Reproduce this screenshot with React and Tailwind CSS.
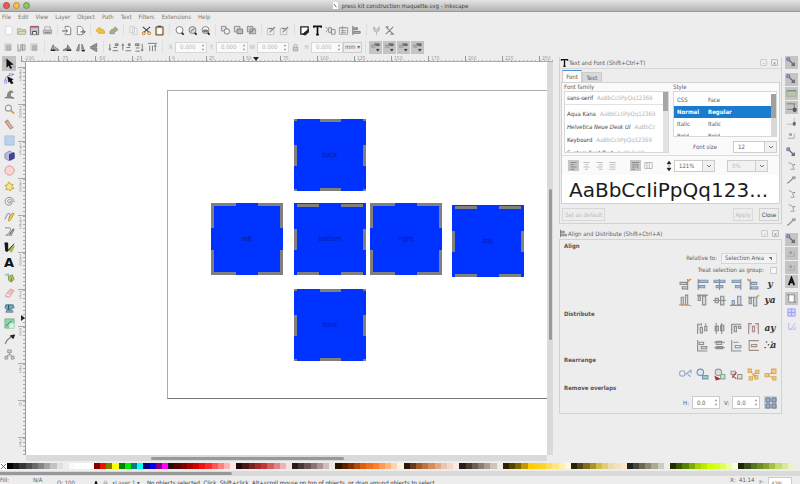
import React from "react";

const P = (d, stroke = "#777", fill = "none", sw = 1) => <path d={d} stroke={stroke} fill={fill} strokeWidth={sw} />;

const shapes = {
  newDoc: <>{P("M3 1.5h5l2 2v7H3z", "#d8d8d8", "#fff")}</>,
  open: <>{P("M1.5 4h4l1 1h4v5h-9z", "#b3b39c", "#cfcdb0")}{P("M3 7h8l-1 3H2z", "#b3b39c", "#deddc4")}</>,
  save: <>{P("M1.5 1.5h9v9h-9z", "#7a6672", "#c9c3d0")}{P("M2 2h8", "#b0505a", "none", 1.5)}{P("M4 10V7h4v3", "#333", "#fff")}</>,
  print: <>{P("M3 5V2h6v3", "#aaa", "#eee")}{P("M1.5 5.5h9v4h-9z", "#999", "#c8c8c8")}{P("M3 8h6", "#777")}</>,
  importI: <>{P("M3.5 4V1.5h4l2 2v7h-6V9", "#777", "#f8f8f8")}{P("M0 6.5h6M4 4.5l2 2-2 2", "#555")}</>,
  exportI: <>{P("M2.5 1.5h4l2 2v7h-6z", "#888", "#f8f8f8")}{P("M6 7.5h5M9 5.5l2 2-2 2", "#555")}</>,
  undo: <>{P("M1 6l4-3.5v2c4-.5 6 1.5 5.5 4.500H5V9.500z", "#e0a82c", "#f2c136")}</>,
  redo: <>{P("M11 5L7.500 2v2C4 4 1.500 6 2 9.500h5V8z", "#999c80", "#a9ac90")}</>,
  copy: <>{P("M2 1.500h5v7H2zM5 3.500h5v7H5z", "#cfcfcf", "#f0f0f0")}</>,
  cut: <>{P("M2 2l7 6M10 2L3 8", "#444", "none", 1.3)}<circle cx="3" cy="9" r="1.6" stroke="#c07a2c" fill="none" /><circle cx="9" cy="9" r="1.6" stroke="#c07a2c" fill="none" /></>,
  paste: <>{P("M2 2h8v9H2z", "#7b6136", "#a38a60")}{P("M3.500 3.500h5v6h-5z", "#eee", "#fff")}{P("M4 1.500h4", "#444", "none", 1.5)}</>,
  zoomSel: <><circle cx="6" cy="5.5" r="3.8" stroke="#777" fill="#fff" />{P("M8.500 8.500l2 2", "#222", "none", 1.8)}</>,
  zoomDraw: <><circle cx="6" cy="5.5" r="3.8" stroke="#777" fill="#ddd" />{P("M4 7l4-3", "#555")}{P("M8.500 8.500l2 2", "#222", "none", 1.8)}</>,
  zoomPage: <><circle cx="6" cy="5.5" r="3.8" stroke="#777" fill="#fff" />{P("M4 5.500h4v2H4z", "#666", "#888")}{P("M8.500 8.500l2 2", "#222", "none", 1.8)}</>,
  dup: <>{P("M1.500 1.500h5v5h-5z", "#888", "#ddd")}<circle cx="7.5" cy="7" r="3" stroke="#777" fill="#eee" /></>,
  clone: <>{P("M1.500 1.500h6v6h-6z", "#888", "#ddd")}{P("M4.500 4.500h6v5h-6z", "#777", "#bbb")}</>,
  unlink: <>{P("M1.500 1.500h6v6h-6zM4.500 4.500h6v5h-6z", "#888", "#ccc")}{P("M3 10l7-7", "#777")}</>,
  group: <>{P("M1.500 3.500h7v7h-7z", "#bbb", "#eee")}{P("M4 8l6-6M3 4h4", "#888", "none", 1.3)}</>,
  fill: <>{P("M2 2h8v5l-3 3H2z", "#222", "#fff", 1.4)}{P("M4 10l6-5v3l-3 3z", "#222", "#222")}</>,
  text: <>{P("M2 3V1.500h8V3M6 2v8.500M4.500 10.500h3", "#111", "none", 1.8)}</>,
  xml: <>{P("M1 2l2 3-2 3", "#999")}{P("M4 3h3v5H4zM7 5h4v5H7z", "#888", "#eee")}</>,
  layers: <>{P("M1.500 3h9v7h-9z", "#999", "#f4f4f4")}{P("M1.500 3h9M3 6h6M3 8h6M5 1v9", "#999")}</>,
  alignI: <>{P("M2 1v10", "#666")}{P("M3 3h4v2H3zM3 7h7v2H3z", "#777", "#bbb")}</>,
  prefs: <>{P("M3 2l3 3 3-3v4l-3 2-3-2zM6 8v3", "#b4b4b4", "#ccc")}</>,
  docprefs: <>{P("M2 2l8 8M10 2l-8 8M2 2h3M7 10h4", "#888", "none", 1.3)}</>,
  selAll: <>{P("M2 2h7v7H2z", "#ccc", "#d8d8d8")}{P("M4 4h4v5H4z", "#aaa", "#bbb")}</>,
  selLayer: <>{P("M2 2v8h3M5 3h5v6H5z", "#aaa", "#ccc")}{P("M7 2v8", "#999")}</>,
  rotL: <>{P("M2 9l2.500-6 1.500 6zM7 9h4L6 5", "#777", "#aaa")}{P("M2 9h5", "#222", "none", 1.4)}</>,
  rotR: <>{P("M1 9h4l1-3zM6 9V3l4 6z", "#777", "#999")}{P("M5 9h5", "#222", "none", 1.4)}</>,
  flipH: <>{P("M1.500 9.500l3-7v7zM10.500 9.500l-3-7v7z", "#777", "#aaa")}{P("M7.500 9.500h3", "#222", "none", 1.4)}</>,
  flipV: <>{P("M9.500 1.500l-7 4h7zM9.500 10.500l-7-4h7z", "#777", "#999")}</>,
  lower: <>{P("M2 2v7M1 7l1 2 1-2M5 9.500h6M6 6h4M8 2h3v2H8z", "#777", "#bbb")}</>,
  raise: <>{P("M2 9V2M1 4l1-2 1 2M5 9.500h6M6 6h4M8 2h2v2H8z", "#777", "#bbb")}</>,
  lowest: <>{P("M1.500 2h4v2h-4zM2 6.500h4M1.500 10h5M9 2v8M8 8l1 2 1-2", "#777", "#bbb")}</>,
  topmost: <>{P("M1 1.500h10M3 4v6M6 4v6M9 10V3M8 5l1-2 1 2", "#777", "#bbb")}</>,
  lock: <>{P("M3 5.500h6v5H3z", "#999", "#ccc")}{P("M4 5V3c0-2 4-2 4 0v2", "#999")}</>,
  affect: <>{P("M1 3.500h9M1 5.500h5", "#888")}{P("M5 2h5v2H7z", "#666", "#777")}{P("M7 8h3l-1.500 2z", "#333", "#333", 0.6)}</>,
  arrow: <>{P("M3 1l7 6-3.500.3L8.500 11 7 11.500 5.300 8 3 10z", "#000", "#111", 0.5)}{P("M1 1v3M1 1h2M10 9h2v2", "#999")}</>,
  node: <>{P("M1 10C1 4 5 1.500 11 1.500", "#6a6ad8")}{P("M0 8h3v3H0zM6 0h3v3H6z", "#7777cc", "#d5d5ff", 0.6)}{P("M4 4l6 3-2 1 2 3-2 1-2-3-1 1z", "#000", "#111", 0.5)}</>,
  tweak: <>{P("M1 9.500c2 0 3-1 3-3 0-4 4-6 6-3-1 0-3 0-3 2s0 3 4 4.500z", "#777", "#8b8b8b")}</>,
  zoomT: <><circle cx="4.8" cy="4.5" r="3.3" stroke="#999" fill="#eef3fa" strokeWidth="1.2" />{P("M7.500 7l3.500 3.500", "#e0972c", "none", 2)}</>,
  measure: <>{P("M1 3l3-2 6 8-3 2z", "#b08070", "#c99a88")}{P("M5 2l5 7M3 3l5 7", "#e9cfc4")}</>,
  rect: <>{P("M1 1h10v10H1z", "#a9bed8", "#bcd2ec")}</>,
  box: <>{P("M1 4l5-3 5 3v5l-5 3-5-3z", "#8c93b8", "#b5b9e0")}{P("M6 5l5-2v6l-5 2z", "#333a80", "#3f489c")}</>,
  circle: <circle cx="6" cy="6" r="5" stroke="#d88f8f" fill="#ffd3d3" />,
  star: <>{P("M5 1l1.500 2L10 4 8.500 6 11 8l-3 .5L7 11 5 9l-3 .5L3 7 1 5l3-1z", "#c0a136", "#f7e48e")}</>,
  spiral: <>{P("M6 6c1-1 2 0 1.500 1-1 1.500-3.500.5-3.500-1C4 3 8 3 9 5.500c.5 3-2 5-4.500 4.500C0 9 0 2 5.500 1.500 9 1.200 11 4 11 6.500", "#8c8c8c")}</>,
  pencil: <>{P("M1 9c3-5 2-7 5-6s-3 5 1 6", "#6470b0")}{P("M5 9l4-7 2 1-4 7-2 1z", "#c0a02c", "#f0d24c")}</>,
  bezier: <>{P("M1 2h5c3 0 0 7-4 8h7", "#888")}{P("M6 9l4-6 1 1-3 5z", "#666", "#bbb")}</>,
  calli: <>{P("M1 1h3v9H2zM4 9c3 0 3-3 7-7", "#111", "#111", 1)}{P("M6 9l4-5 1 1-3 6z", "#83a02c", "#bcd54d")}</>,
  bucket: <>{P("M1 3l4-1 0 4", "#8fb0d0", "#bcd")}{P("M5 5l4-2 2 5-3 3-3-2z", "#7a9638", "#b1cb65")}{P("M8 6v4", "#5d7a27")}</>,
  eraser: <>{P("M2 7l5-6 4 2-5 7-4-.5z", "#d8a0a0", "#f4bcbc")}{P("M2 7l4 1.500", "#fff")}</>,
  spray: <>{P("M2 2h8l1 3-4 2H3L1 5z", "#397a91", "#75a7ba")}{P("M3 8h6l1 2H2z", "#5f8096", "#8fb0c0")}{P("M5 2v5", "#345")}</>,
  gradient: <>{P("M1 1h10v10H1z", "#7ab490", "#8fd0ab")}{P("M6 6h5v5H6z", "#bfe3cc", "#d8f2e0")}{P("M2 9l6-6", "#367a70")}</>,
  dropper: <>{P("M1.500 11C2 8 5 5 8 3.500", "#888", "none", 1.5)}{P("M7 2l3 3 1.500-4z", "#111", "#222")}</>,
  connector: <>{P("M4 1h4v3H4zM1 8h3v3H1zM8 8h3v3H8zM6 4v2M2.500 8L6 5.500 9.500 8", "#999", "#ccc")}</>,
  snap: <>{P("M2 2l7 7M6 9h3V6", "#667", "none", 1.4)}{P("M1 1h3v3H1z", "#6a72a8", "#9aa0c8")}</>,
  snapBox: <>{P("M1 3h10v6H1z", "#9bb08f", "#b8c9ab")}{P("M1 3h10", "#777")}</>,
  snapEdge: <>{P("M1 2h9M1 8h7M9 2v9", "#777")}{P("M8 7h3v3H8z", "#444", "#666")}</>,
  snapCorner: <>{P("M1 9h8M9 2v6", "#bbb")}{P("M8 7h2v3H8z", "#666", "#666")}</>,
  snapMid: <>{P("M2 9h7V4", "#aaa")}{P("M4 4h2v2H4z", "#999", "#bbb")}</>,
  snapPath: <>{P("M3 2c5 0 4 4 6 7M5 9h4", "#999")}{P("M8 4h2", "#666")}</>,
  snapCurve: <>{P("M1 9c4 0 4-6 9-6", "#888", "none", 1.3)}{P("M7 2h3v2H7z", "#99a", "#aab")}</>,
  snapText: <>{P("M3 10l3-8 3 8M4 7h4", "#111", "none", 2)}</>,
  snapPage: <>{P("M3 2h6v8H3z", "#888", "#fff")}{P("M1 2h2M9 10h2", "#777")}</>,
  snapGrid: <>{P("M2 2h8v8H2zM2 6h8M6 2v8", "#a0a0f4", "#d0d0ff")}</>,
  snapGuide: <>{P("M3 2v7h3M5 10l5-8M7 9h3V6", "#b4b4f5")}</>,
};

const Icon = ({ name, className = "size-[11px]" }) => (
  <svg viewBox="0 0 12 12" className={className} aria-hidden="true">{shapes[name]}</svg>
);

const Tool = ({ name, on }) => (
  <button aria-label={name} className={"flex h-[13px] w-[13px] shrink-0 items-center justify-center " + (on ? "bg-[#c4c4c4]" : "")}>
    <Icon name={name} />
  </button>
);

const Sep = () => <span className="mx-[3px] h-3 w-px shrink-0 bg-[#dedede]" />;

const ToolGroups = ({ groups }) =>
  groups.map((g, i) => (
    <React.Fragment key={i}>
      {i > 0 && <Sep />}
      {g.map((n, j) => <Tool key={j} name={n} />)}
    </React.Fragment>
  ));

const Field = ({ label, value }) => (
  <label className="flex items-center text-[#b5b5b5]">
    <span className="w-[9px] text-center">{label}</span>
    <span className="flex h-[11px] w-8 items-center border border-[#d8d8d8] bg-[#fafafa]">
      <input defaultValue={value} className="w-6 min-w-0 bg-transparent pl-1 outline-none" />
      <Spin />
    </span>
  </label>
);

const Spin = () => (
  <svg viewBox="0 0 6 10" className="h-[9px] w-[6px] shrink-0" aria-hidden="true">
    <path d="M1.500 3.500L3 1.500l1.500 2zM1.500 6.500L3 8.500l1.500-2z" fill="#999" />
  </svg>
);

const topTools = [
  ["newDoc", "open", "save", "print"],
  ["importI", "exportI"],
  ["undo", "redo"],
  ["copy", "cut", "paste"],
  ["zoomSel", "zoomDraw", "zoomPage"],
  ["dup", "clone", "unlink"],
  ["group", "group"],
  ["fill", "text", "xml", "layers", "alignI"],
  ["prefs", "docprefs"],
];

const selTools = [
  ["selAll", "selLayer", "selAll"],
  ["rotL", "rotR", "flipH", "flipV"],
  ["lower", "raise", "lowest", "topmost"],
];

const boxTools = ["arrow", "node", "tweak", "zoomT", "measure", "rect", "box", "circle", "star", "spiral", "pencil", "bezier", "calli", "letter", "bucket", "eraser", "spray", "gradient", "dropper", "connector"];

const snapGroups = [
  [["snap", 1]],
  [["snap", 1], ["snapBox", 1], ["snapEdge", 1], ["snapCorner", 0], ["snapMid", 0]],
  [["snap", 0], ["snapPath", 0], ["snapCurve", 0], ["snapPath", 0], ["snapPath", 0], ["snapCurve", 0]],
  [["snap", 1], ["snapMid", 1], ["snapMid", 1], ["snapText", 1]],
  [["snapPage", 1], ["snapGrid", 0], ["snapGuide", 0]],
];

// Grey finger-joint tabs, by panel kind, on a 72 unit square.
const joints = {
  mid: "M0 0h3v2H0zM69 0h3v2h-3zM0 70h3v2H0zM69 70h3v2h-3zM26 0h21v3H26zM26 69h21v3H26zM0 26h3v21H0zM69 26h3v21h-3z",
  corner: "M0 0h25v3H3v22H0zM47 0h25v25h-3V3H47zM0 47h3v22h22v3H0zM69 47h3v25H47v-3h22z",
  mixed: "M3 1h22v3H3zM47 1h22v3H47zM3 69h22v3H3zM47 69h22v3H47zM0 26h3v21H0zM69 26h3v21h-3z",
};

const Panel = ({ place, kind, label }) => (
  <div className={"absolute flex size-[72px] items-center justify-center bg-[#0033ff] " + place}>
    <svg viewBox="0 0 72 72" className="absolute inset-0" aria-hidden="true"><path d={joints[kind]} fill="#808080" /></svg>
    <span className="relative text-[7px] text-[#0a1c8c]">{label}</span>
  </div>
);

const hex = (c) => [1, 3, 5].map((i) => parseInt(c.slice(i, i + 2), 16));
const mix = (stops, t) => {
  const p = t * (stops.length - 1);
  const i = Math.min(Math.floor(p), stops.length - 2);
  const a = hex(stops[i]);
  const b = hex(stops[i + 1]);
  return `rgb(${a.map((v, k) => Math.round(v + (b[k] - v) * (p - i))).join(",")})`;
};
const ramps = [
  [14, ["#000000", "#444444", "#8a8a8a", "#dddddd", "#ffffff", "#ffffff"]],
  [12, ["#800000", "#ee1100", "#808000", "#ffff00", "#008000", "#00ee00", "#008080", "#00ffff", "#000080", "#0000ff", "#800080", "#ff00ff"]],
  [11, ["#280b0b", "#800000", "#d40000", "#ff2a2a", "#ff8080", "#ffe5e5"]],
  [9, ["#1c0a0a", "#782121", "#c83737", "#de8787", "#f9e0e0"]],
  [7, ["#241c1c", "#6c5353", "#ac9393", "#f0e8e8"]],
  [11, ["#2b1100", "#803300", "#e06010", "#ff7f2a", "#ffb380", "#fff0e0"]],
  [9, ["#28170b", "#a05a2c", "#d38d5f", "#e9c6af", "#fbeae0"]],
  [7, ["#241f1c", "#6c5d53", "#ac9d93", "#efebe8"]],
  [11, ["#2b2200", "#806600", "#ffcc00", "#ffd42a", "#ffe680", "#fff8e0"]],
  [9, ["#28220b", "#806c20", "#d3bc3f", "#e9ddaf", "#fbe6cc"]],
  [7, ["#24221c", "#6c6753", "#aca793", "#eeeee6"]],
  [11, ["#222b00", "#558000", "#aad400", "#ccff00", "#ddff55", "#f8ffe0"]],
  [9, ["#1a2409", "#55751f", "#89a02c", "#c2dd68", "#e8f4c8"]],
];

const Palette = () => (
  <div className="flex h-[10px] shrink-0 items-center pr-[6px]">
    <svg viewBox="0 0 7 7" className="size-[7px] shrink-0 bg-white" aria-hidden="true"><path d="M1 1l5 5M6 1L1 6" stroke="#a55" /></svg>
    {ramps.map(([n, stops], i) => (
      <div key={i} className="flex h-[6px]" style={{ flexGrow: n, flexBasis: 0 }}>
        {Array.from({ length: n }, (_, j) => <span key={j} className="flex-1" style={{ background: mix(stops, j / (n - 1)) }} />)}
      </div>
    ))}
  </div>
);

const DockTitle = ({ icon, children }) => (
  <div className="flex h-[11px] items-center pr-[3px]">
    <span className="flex w-[9px] justify-center">{icon}</span>
    <h2 className="flex-1">{children}</h2>
    <button aria-label="Iconify" className="mr-1 flex size-[7px] items-center justify-center rounded-[1px] border border-[#ccc] text-[5px] text-[#888]">–</button>
    <button aria-label="Close panel" className="flex size-[7px] items-center justify-center rounded-[1px] border border-[#bbb] text-[5px] text-[#666]">×</button>
  </div>
);

const families = [
  ["sans-serif", "AaBbCcIiPpQq12369", "text-[#334]"],
  ["Aqua Kana", "AaBbCcIiPpQq12369", "text-[#444]"],
  ["Helvetica Neue Desk UI", "AaBbCc", "italic text-[#444]"],
  ["Keyboard", "AaBbCcIiPpQq12369", "text-[#444]"],
  ["System Font Text", "AaBbCcIiP", "text-[#444]"],
];

const faces = [["CSS", "Face"], ["Normal", "Regular"], ["Italic", "Italic"], ["Bold", "Bold"]];

const Down = () => (
  <svg viewBox="0 0 6 6" className="size-[6px]" aria-hidden="true"><path d="M1 2l2 2 2-2" stroke="#777" fill="none" /></svg>
);

const Combo = ({ label, value, off, width }) => (
  <span className="flex h-3">
    <input aria-label={label} defaultValue={value} disabled={off} className={"min-w-0 border border-[#ccc] pl-1 outline-none " + width + (off ? " bg-[#f2f2f2] text-[#bbb]" : " bg-white")} />
    <button aria-label={label + " list"} className="flex w-3 items-center justify-center border border-l-0 border-[#ccc] bg-[#f0f0f0]"><Down /></button>
  </span>
);

const LineAlign = ({ i, on }) => (
  <button aria-label={"Text alignment " + (i + 1)} className={"flex size-[11px] items-center justify-center " + (on ? "bg-[#c6c6c6]" : "")}>
    <svg viewBox="0 0 12 12" className="size-[9px]" aria-hidden="true">
      <path d={["M2 2h8M2 5h5M2 8h8M2 11h5", "M2 2h8M4 5h4M2 8h8M4 11h4", "M2 2h8M5 5h5M2 8h8M5 11h5", "M2 2h8M2 5h8M2 8h8M2 11h8", "M1 2h10M1 5h7M1 8h6M1 11h4M9 4v6", "M1 2h10v8H1zM4 2v8M7 2v8"][i]} stroke={on ? "#777" : "#aaa"} fill="none" />
    </svg>
  </button>
);

const TextPanel = () => (
  <section className="flex flex-col border-x border-b border-[#d2d2d2] pb-[2px]">
    <DockTitle icon={<Icon name="text" className="size-[10px]" />}>Text and Font (Shift+Ctrl+T)</DockTitle>
    <div className="flex items-end border-t border-[#d8d8d8] px-[2px] pt-px">
      <button className="h-3 w-5 border border-b-0 border-[#ccc] border-t-[#4a90d9] bg-[#fafafa]">Font</button>
      <button className="h-[10px] w-5 border border-b-0 border-[#ccc] bg-[#dadada]">Text</button>
    </div>
    <div className="mx-px border border-[#d2d2d2] bg-[#fafafa]">
      <div className="flex gap-1 px-[2px]">
        <div className="min-w-0 flex-1">
          <h3 className="h-2 leading-[8px]">Font family</h3>
          <div className="flex h-[62px] border border-[#d8d8d8] bg-white">
            <ul className="min-w-0 flex-1 overflow-hidden">
              {families.map(([f, sample, c], i) => (
                <li key={f} className={"flex h-[13px] items-center gap-1 overflow-hidden pl-[2px] whitespace-nowrap " + (i === 0 ? "mb-[2px] border-b border-[#e2e2e2] " : "") + c}>
                  <span>{f}</span><span className="text-[#b4b4b4]">{sample}</span>
                </li>
              ))}
            </ul>
            <div className="w-[5px] bg-[#e2e2e2]"><div className="h-[19px] bg-[#a6a6a6]" /></div>
          </div>
        </div>
        <div className="w-[104px] shrink-0">
          <h3 className="h-2 leading-[8px]">Style</h3>
          <div className="flex h-[46px] overflow-hidden border border-[#d8d8d8] bg-white pt-[2px]">
            <table className="h-12 flex-1 table-fixed border-collapse text-left">
              <tbody>
                {faces.map(([a, b], i) => (
                  <tr key={a} className={"h-3 " + (i === 1 ? "bg-[#1a7ccf] font-bold text-white" : "text-[#555]")}>
                    <td className="w-[31px] p-0 pl-[3px]">{a}</td>
                    <td className="p-0 pl-[3px]">{b}</td>
                  </tr>
                ))}
              </tbody>
            </table>
            <div className="w-[5px] bg-[#d8d8d8]"><div className="h-6 bg-[#a0a0a0]" /></div>
          </div>
          <div className="mt-1 flex items-center justify-end gap-4">
            <span>Font size</span>
            <Combo label="Font size" value="12" width="w-8" />
          </div>
        </div>
      </div>
      <div className="mt-[2px] flex h-5 items-center border-t border-[#dcdcdc] px-[6px]">
        <span className="flex gap-[2px]"><LineAlign i={0} on /><LineAlign i={1} /><LineAlign i={2} /><LineAlign i={3} /></span>
        <span className="ml-3 flex gap-[2px]"><LineAlign i={4} on /><LineAlign i={5} /></span>
        <svg viewBox="0 0 6 10" className="mr-[2px] ml-3 h-[10px] w-[6px]" aria-hidden="true"><path d="M1 3l2-3 2 3zM1 7l2 3 2-3zM2 5h2" fill="#222" stroke="#222" strokeWidth=".5" /></svg>
        <Combo label="Line spacing" value="121%" width="w-[29px]" />
        <span className="ml-3"><Combo label="Word spacing" value="0%" width="w-[29px]" off /></span>
      </div>
      <p className="bg-white pt-[3px] pl-[7px] font-['DejaVu_Sans',sans-serif] text-[20px] leading-[25px] whitespace-nowrap text-[#1c1c1c]">AaBbCcIiPpQq123...</p>
    </div>
    <div className="mx-[2px] mt-1 flex h-[13px] justify-between">
      <button disabled className="border border-[#d8d8d8] px-[2px] text-[#bbb]">Set as default</button>
      <span className="flex gap-[6px]">
        <button disabled className="w-5 border border-[#d8d8d8] text-[#bbb]">Apply</button>
        <button className="w-5 border border-[#d0d0d0] text-[#444]">Close</button>
      </span>
    </div>
  </section>
);

const A = "#8094ac";
const G = "#8e8e8e";
const alignDraw = {
  a1: <>{P("M1 4h6v2H1zM3 8h5v2H3zM8 1v10", G, "#ccd6e4")}{P("M8 3l3-2", "#e09050", "none", 1.5)}</>,
  a2: <>{P("M2 1v10M3 2h8v2H3zM3 7h5v2H3z", A, "#b9cbe2")}</>,
  a3: <>{P("M6 1v10M1 2h10v2H1zM3 7h6v2H3z", A, "#b9cbe2")}</>,
  a4: <>{P("M10 1v10M2 2h8v2H2zM5 7h5v2H5z", A, "#b9cbe2")}</>,
  a5: <>{P("M3 1v10M4 4h5v2H4zM4 8h6v2H4z", A, "#b9cbe2")}{P("M0 1l3 2", "#e09050", "none", 1.5)}</>,
  b1: <>{P("M2 3h2v7H2zM6 1h2v9H6z", G, "#ddd")}{P("M8 10l3 1M0 10h9", "#c09a70")}</>,
  b2: <>{P("M1 1h10M2 2h2v4H2zM6 2h3v8H6z", G, "#d4dae0")}</>,
  b3: <>{P("M0 6h12M2 4h3v4H2zM7 2h3v8H7z", G, "#d4dae0")}</>,
  b4: <>{P("M0 10.500h12M2 6h2v4H2zM7 2h3v8H7z", A, "#d4dae0")}</>,
  b5: <>{P("M2 4h2v5H2zM6 3h3v8H6zM1 3h8", G, "#ccd6e4")}{P("M9 3l2-2", "#d0a050", "none", 1.5)}</>,
  d1: <>{P("M1.500 11V2h4M4 5h2v5H4zM8 4h2v4H8z", G, "#ddd")}{P("M5 1v3M9 1v3", "#c49090")}</>,
  d2: <>{P("M3 1v10M8 1v10M2 4h3v4H2zM7 3h3v5H7z", G, "#c8d2de")}</>,
  d3: <>{P("M1.500 11V2h9M4 4h2v5H4zM8 4h2v2H8z", G, "#ddd")}</>,
  d4: <>{P("M1.500 11V1.500h3M10.500 11V1.500h-3M5 4h2v5H5z", "#a98a8a", "#ddd")}</>,
  e1: <>{P("M1.500 1v10h9M3 3h4v2H3zM5 7h5v2H5z", G, "#e4e4e4")}</>,
  e2: <>{P("M1 3h10M1 8h10M3 2h5v3H3zM3 7h6v2H3z", G, "#cfd4da")}</>,
  e3: <>{P("M1.500 1v10h9M3 3h5M5 6h5v2H5z", "#8098a8", "#e4e4e4")}</>,
  e4: <>{P("M2 1.500h9M2 10.500h9M2 1v10M4 5h5v2H4z", "#a09088", "#e4e4e4")}</>,
  r1: <><circle cx="3" cy="5" r="2.5" stroke="#9aaac4" fill="#eef" />{P("M6 6l5-4v3M8 6l3 2", "#90a4c0")}</>,
  r2: <><circle cx="4" cy="4" r="3" stroke="#7c90b4" fill="#e0e6f4" />{P("M6 7h5v3H6z", "#6ea0a0", "#9bd0cc")}</>,
  r3: <><circle cx="5" cy="4" r="3" stroke="#999" fill="#ddd" />{P("M2 8l4 2-3 1z", "#b02030", "#c03040")}{P("M7 6h4v4H7z", "#8aa890", "#cdd")}</>,
  r4: <>{P("M1 3h4v3H1zM7 6h4v4H7z", "#998", "#ddd")}{P("M2 9l4-5M2 7l4 3", "#c03040")}</>,
  r5: <>{P("M1 1h3v3H1zM8 2h3v3H8zM2 8h3v3H2zM7 7h3v3H7zM4 4l4 4M8 4L5 8", "#d8aa58", "#f5cf80")}</>,
  r6: <>{P("M1 5h3v3H1zM7 1h4v4H7zM8 8h3v3H8zM4 6l4-2M4 7l4 2", "#d8aa58", "#f5cf80")}</>,
};

const words = { ty: "y", tya: "ya", tay: "ay", tx: "⁙a" };

const AlignBtn = ({ name }) => (
  <button aria-label={"Arrange " + name} className="flex size-[14px] items-center justify-center">
    {words[name] ? (
      <span className="font-['DejaVu_Serif',serif] text-[9px] leading-[12px] font-bold text-[#333] italic">{words[name]}</span>
    ) : (
      <svg viewBox="0 0 12 12" className="size-[13px]" aria-hidden="true">{alignDraw[name]}</svg>
    )}
  </button>
);

const AlignRow = ({ names }) => (
  <div className="flex h-4 items-center justify-end gap-[3px]">{names.map((n) => <AlignBtn key={n} name={n} />)}</div>
);

const Heading = ({ children }) => <h3 className="h-3 leading-[12px] font-bold text-[#555]">{children}</h3>;

const Gap = ({ label }) => (
  <label className="flex items-center gap-[3px]">
    {label}
    <span className="flex h-[13px] w-7 items-center border border-[#ccc] bg-white">
      <input defaultValue="0.0" className="w-5 min-w-0 bg-transparent pl-1 outline-none" /><Spin />
    </span>
  </label>
);

const AlignPanel = () => (
  <section>
    <DockTitle icon={<Icon name="alignI" className="size-[9px]" />}>Align and Distribute (Shift+Ctrl+A)</DockTitle>
    <div className="flex flex-col border border-[#d2d2d2] px-1 pb-[2px]">
      <Heading>Align</Heading>
      <label className="flex h-3 items-center justify-end gap-1">
        Relative to:
        <select className="h-[11px] w-[56px] appearance-none border border-[#d6d6d6] bg-[#f2f2f2] bg-[linear-gradient(45deg,transparent_50%,#777_50%)] bg-[length:3px_3px] bg-[position:right_4px_center] bg-no-repeat pl-[3px]"><option>Selection Area</option></select>
      </label>
      <label className="flex h-3 items-center justify-end gap-[6px]">
        Treat selection as group:
        <input type="checkbox" className="size-[7px] appearance-none border border-[#ccc] bg-[#f6f6f6]" />
      </label>
      <AlignRow names={["a1", "a2", "a3", "a4", "a5", "ty"]} />
      <AlignRow names={["b1", "b2", "b3", "b4", "b5", "tya"]} />
      <Heading>Distribute</Heading>
      <div className="flex flex-col gap-px pb-px">
        <AlignRow names={["d1", "d2", "d3", "d4", "tay"]} />
        <AlignRow names={["e1", "e2", "e3", "e4", "tx"]} />
      </div>
      <Heading>Rearrange</Heading>
      <AlignRow names={["r1", "r2", "r3", "r4", "r5", "r6"]} />
      <Heading>Remove overlaps</Heading>
      <div className="flex h-[17px] items-center justify-end gap-1">
        <Gap label="H:" /><Gap label="V:" />
        <button aria-label="Remove overlaps" className="flex size-[13px] items-center justify-center bg-[#c6ccd2]">
          <svg viewBox="0 0 12 12" className="size-3" aria-hidden="true"><path d="M1 1h4v4H1zM7 1h4v4H7zM1 7h4v4H1zM7 7h4v4H7z" stroke="#66788c" fill="#9fb0c2" /></svg>
        </button>
      </div>
    </div>
  </section>
);

const hMarks = [-100, -75, -50, -25, 0, 25, 50, 75, 100, 125, 150, 175, 200, 225, 250];
const vMarks = [225, 200, 175, 150, 125, 100, 75, 50, 25, 0, 25];

export default function App() {
  return (
    <div className="flex h-screen w-full flex-col overflow-hidden bg-[#ededed] font-['DejaVu_Sans_Condensed','DejaVu_Sans',sans-serif] text-[6px] leading-[8px] text-[#5c5c5c]">
      <header className="flex h-3 shrink-0 items-center justify-between border-b border-[#999] bg-linear-to-b from-[#e4e4e4] to-[#b4b4b4] px-[3px]">
        <div className="flex w-10 gap-[3px]">
          <button aria-label="Close window" className="size-[7px] rounded-full border border-[#b5443c] bg-[#ee5a50]" />
          <button aria-label="Minimize window" className="size-[7px] rounded-full border border-[#c09030] bg-[#f5bf4a]" />
          <button aria-label="Zoom window" className="size-[7px] rounded-full border border-[#6a9a40] bg-[#8cc860]" />
        </div>
        <h1 className="flex items-center gap-[3px] text-[#3c3c3c]">
          <svg viewBox="0 0 8 8" className="size-[7px]" aria-hidden="true"><path d="M1 0h4l2 2v6H1z" fill="#fff" /><path d="M2 2l3 4" stroke="#555" /></svg>
          press kit construction maquette.svg - Inkscape
        </h1>
        <div className="w-10" />
      </header>
      <nav className="flex h-[10px] shrink-0 items-center gap-[7px] pl-[2px] text-[#777]">
        {["File", "Edit", "View", "Layer", "Object", "Path", "Text", "Filters", "Extensions", "Help"].map((m) => <button key={m}>{m}</button>)}
      </nav>
      <div className="flex h-4 shrink-0 items-center pl-[2px]"><ToolGroups groups={topTools} /></div>
      <div className="flex h-[18px] shrink-0 items-center pl-[2px]">
        <ToolGroups groups={selTools} />
        <Sep />
        <Field label="X" value="0.000" /><Field label="Y" value="0.000" /><Field label="W" value="0.000" />
        <button aria-label="Lock ratio" className="mx-[2px]"><Icon name="lock" className="size-[9px]" /></button>
        <Field label="H" value="0.000" />
        <select aria-label="Unit" className="h-[11px] w-[19px] appearance-none border border-[#ccc] bg-[#eee] pl-px"><option>mm ▾</option></select>
        <Sep />
        <span className="flex gap-px"><Tool name="affect" on /><Tool name="affect" on /><Tool name="affect" on /><Tool name="affect" on /></span>
      </div>

      <main className="flex min-h-0 flex-1">
        <div className="flex h-[306px] w-[18px] shrink-0 flex-col items-center justify-between">
          {boxTools.map((n, i) => (
            <button key={n} aria-label={n} className={"flex h-[15px] w-[14px] items-center justify-center " + (i === 0 ? "bg-[#c2c2c2]" : "")}>
              {n === "letter" ? <span className="font-['DejaVu_Sans',sans-serif] text-[13px] font-bold text-[#111]">A</span> : <Icon name={n} />}
            </button>
          ))}
        </div>

        <div className="flex min-w-0 flex-1 flex-col">
          <div className="relative ml-[3px] flex h-[6px] shrink-0 overflow-hidden border-b border-[#aaa]">
            {hMarks.map((m) => (
              <span key={m} className="h-[6px] w-[37px] shrink-0 border-l border-[#999] bg-[repeating-linear-gradient(90deg,#b4b4b4_0_1px,transparent_1px_4px)] bg-[length:100%_2px] bg-bottom bg-no-repeat pl-[2px] text-[5px] leading-[5px] text-[#999]">{m}</span>
            ))}
            <svg viewBox="0 0 6 4" className="absolute bottom-0 left-[232px] h-1 w-[6px]" aria-hidden="true"><path d="M0 0h6L3 4z" fill="#222" /></svg>
          </div>
          <div className="flex min-h-0 flex-1">
            <div className="relative flex w-2 shrink-0 flex-col overflow-hidden border-r border-[#999] pt-[5px]">
              {vMarks.map((m, i) => (
                <span key={i} className="h-[37px] shrink-0 border-t border-[#aaa] bg-[repeating-linear-gradient(180deg,#aaa_0_1px,transparent_1px_4px)] bg-[length:2px_100%] bg-right bg-no-repeat pt-px pl-px text-[5px] leading-[4px] break-all text-[#999]">
                  <span className="block w-[3px]">{m}</span>
                </span>
              ))}
              <svg viewBox="0 0 4 6" className="absolute top-[253px] right-0 h-[6px] w-1" aria-hidden="true"><path d="M0 0v6l4-3z" fill="#222" /></svg>
            </div>
            <div className="relative min-w-0 flex-1 overflow-hidden bg-white">
              <div className="absolute top-[28px] -right-px left-[141px] h-[309px] border border-[#aaa] border-b-[#777]" />
              <Panel place="left-[268px] top-[57px]" kind="mid" label="back" />
              <Panel place="left-[185px] top-[141px]" kind="corner" label="left" />
              <Panel place="left-[268px] top-[141px]" kind="mixed" label="bottom" />
              <Panel place="left-[344px] top-[141px]" kind="corner" label="right" />
              <Panel place="left-[426px] top-[143px]" kind="mixed" label="top" />
              <Panel place="left-[268px] top-[227px]" kind="mid" label="front" />
            </div>
            <div className="flex w-[6px] shrink-0 justify-center bg-[#dadada] pt-[127px]"><div className="h-[151px] w-[3px] rounded-full bg-[#989898]" /></div>
          </div>
          <div className="mr-[6px] ml-2 flex h-[6px] shrink-0 items-center bg-[#dadada]"><div className="ml-[24%] h-[3px] w-[37%] rounded-full bg-[#989898]" /></div>
        </div>

        <aside className="ml-[6px] flex w-[223px] shrink-0 flex-col gap-1 pt-px">
          <TextPanel />
          <AlignPanel />
        </aside>

        <div className="ml-[3px] flex w-[15px] shrink-0 flex-col gap-1">
          {snapGroups.map((g, i) => (
            <div key={i} className="flex flex-col gap-px">
              {g.map(([n, on], j) => <Tool key={j} name={n} on={on} />)}
            </div>
          ))}
        </div>
      </main>

      <Palette />
      <div className="flex h-[5px] shrink-0 items-center bg-[#dadada]"><div className="h-[3px] w-[29%] rounded-r-full bg-[#989898]" /></div>
      <footer className="h-2 shrink-0 overflow-hidden">
        <div className="flex h-[14px] items-center">
          <span className="mb-[6px] w-[33px]">Fill:</span>
          <span className="mb-[6px] w-[24px]">N/A</span>
          <span className="w-[36px]">O: 100</span>
          <span className="flex flex-1 items-center gap-[3px] whitespace-nowrap">
            <Icon name="snapText" className="size-[6px]" />
            <Icon name="lock" className="size-[7px]" />
            <span className="w-[32px]">•Layer 1 ▾</span>
            <span className="text-[#333]">No objects selected. Click, Shift+click, Alt+scroll mouse on top of objects, or drag around objects to select.</span>
          </span>
          <span className="mb-[6px] mr-1">X:&nbsp; 41.14</span>
          <label className="flex items-center gap-1 pr-2">Z: <input defaultValue="42%" className="h-3 w-6 border border-[#ccc] bg-white pl-[2px]" /></label>
        </div>
      </footer>
    </div>
  );
}
